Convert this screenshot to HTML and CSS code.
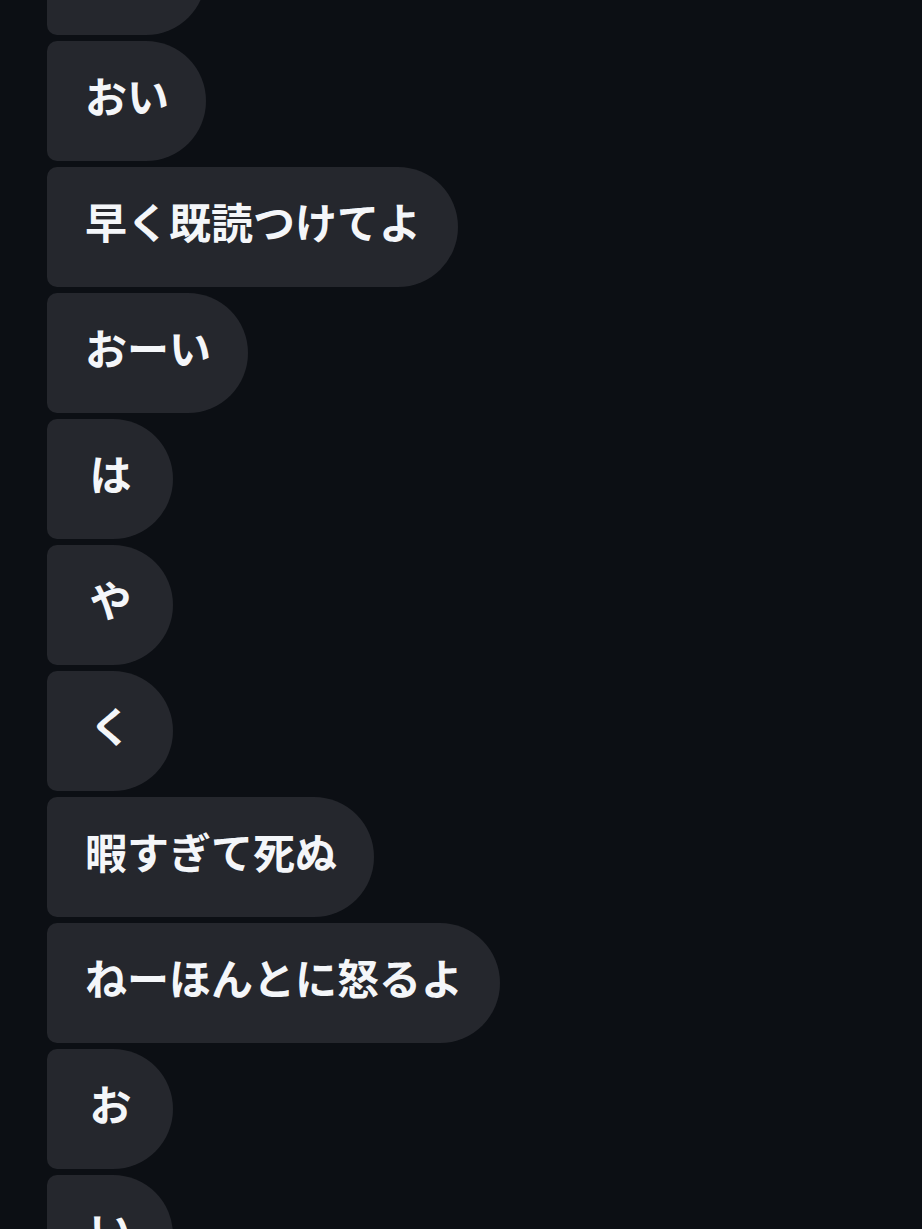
FILE: index.html
```html
<!DOCTYPE html>
<html lang="ja">
<head>
<meta charset="utf-8">
<link rel="stylesheet" href="styles.css">
</head>
<body>
<div class="thread">
  <div class="bubble">ねえ</div>
  <div class="bubble">おい</div>
  <div class="bubble">早く既読つけてよ</div>
  <div class="bubble">おーい</div>
  <div class="bubble">は</div>
  <div class="bubble">や</div>
  <div class="bubble">く</div>
  <div class="bubble">暇すぎて死ぬ</div>
  <div class="bubble">ねーほんとに怒るよ</div>
  <div class="bubble">お</div>
  <div class="bubble">い</div>
</div>
</body>
</html>
```
FILE: styles.css
```css
html, body {
  margin: 0;
  padding: 0;
  background: #0c0f14;
  height: 100%;
  overflow: hidden;
}
.thread {
  display: flex;
  flex-direction: column;
  align-items: flex-start;
  gap: 6px;
  padding-left: 47px;
  margin-top: -85px;
}
.bubble {
  box-sizing: border-box;
  height: 120px;
  min-width: 126px;
  padding: 0 37px 12px 38px;
  display: flex;
  align-items: center;
  justify-content: center;
  background: #25272d;
  color: #f4f6f9;
  border-radius: 10px 60px 60px 10px;
  font-family: "Noto Sans CJK JP", "Noto Sans", sans-serif;
  font-weight: 700;
  font-size: 42px;
  line-height: 1;
  white-space: nowrap;
}
```
